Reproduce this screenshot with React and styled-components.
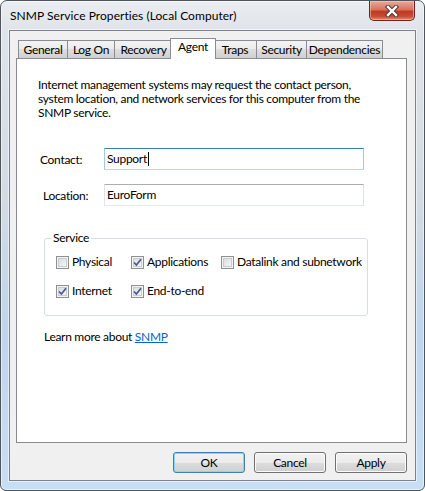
import React from "react";
import styled, { createGlobalStyle } from "styled-components";

const GlobalStyle = createGlobalStyle`
  html, body { margin: 0; padding: 0; background: #fff; }
  body {
    font-family: Lato, "Liberation Sans", sans-serif;
    font-size: 12px;
    letter-spacing: -0.3px;
    color: #000;
  }
  * { box-sizing: border-box; }
`;

const Window = styled.div`
  width: 425px;
  height: 491px;
  border: 1px solid #4f555c;
  border-radius: 7px 7px 6px 6px;
  background: linear-gradient(
    180deg,
    #eaedf1 0px,
    #dfe4ea 30px,
    #d4dbe2 190px,
    #bdd6ee 330px,
    #c7dff4 491px
  );
  box-shadow: inset 0 0 0 1px rgba(255, 255, 255, 0.55);
  display: flex;
  flex-direction: column;
  overflow: hidden;
`;

const TitleBar = styled.div`
  height: 29px;
  display: flex;
  align-items: flex-start;
  padding-left: 9px;
`;

const Title = styled.div`
  font-size: 12px;
  letter-spacing: 0.05px;
  line-height: 30px;
  color: #000;
  white-space: nowrap;
`;

const CloseButton = styled.div`
  margin-left: auto;
  margin-right: 9px;
  width: 46px;
  height: 20px;
  border: 1px solid #6e2418;
  border-top: none;
  border-radius: 0 0 5px 5px;
  background: linear-gradient(
    180deg,
    #e9a99b 0%,
    #d9735e 45%,
    #c13a22 55%,
    #c94a33 80%,
    #e08a73 100%
  );
  box-shadow: inset 0 0 0 1px rgba(255, 210, 200, 0.5);
  display: flex;
  align-items: center;
  justify-content: center;
`;

const Client = styled.div`
  flex: 1;
  margin: 0 8px 9px 8px;
  border: 1px solid #7b848e;
  box-shadow: 0 0 0 1px rgba(255, 255, 255, 0.55);
  background: #f0f0f0;
  display: flex;
  flex-direction: column;
  padding: 7px 8px 0 6px;
`;

const TabStrip = styled.div`
  height: 20px;
  display: flex;
  align-items: flex-end;
  padding-left: 2px;
  position: relative;
  z-index: 1;
`;

const Tab = styled.div`
  position: relative;
  width: ${(p) => (p.$active ? p.$w + 4 : p.$w)}px;
  height: ${(p) => (p.$active ? 21 : 18)}px;
  margin: ${(p) => (p.$active ? "0 -3px -1px -2px" : "0 -1px 0 0")};
  z-index: ${(p) => (p.$active ? 2 : 1)};
  border: 1px solid #898c95;
  border-bottom: none;
  background: ${(p) =>
    p.$active
      ? "#ffffff"
      : "linear-gradient(180deg, #f3f3f3 0%, #ebebeb 50%, #dedede 50%, #d0d0d0 100%)"};
  font-size: 12px;
  line-height: ${(p) => (p.$active ? 16 : 18)}px;
  text-align: center;
  white-space: nowrap;
`;

const Panel = styled.div`
  height: 385px;
  border: 1px solid #898c95;
  background: #fff;
  padding: 19px 0 0 21px;
  display: flex;
  flex-direction: column;
  align-items: flex-start;
`;

const Intro = styled.p`
  margin: 0;
  line-height: 14px;
  white-space: nowrap;
`;

const FieldRow = styled.div`
  display: flex;
  align-items: center;
  margin-top: ${(p) => p.$mt}px;
`;

const FieldLabel = styled.div`
  width: 66px;
  padding-left: ${(p) => p.$indent}px;
`;

const TextBox = styled.div`
  width: 260px;
  height: 22px;
  border: 1px solid;
  border-color: ${(p) =>
    p.$focused
      ? "#3d7bad #a4c9e3 #b7d9ed #a4c9e3"
      : "#abadb3 #dbdfe6 #e3e9ef #e2e3ea"};
  padding-left: 2px;
  line-height: 20px;
  display: flex;
  align-items: center;
`;

const Caret = styled.span`
  display: inline-block;
  width: 1px;
  height: 14px;
  background: #000;
  margin-left: 1px;
`;

const GroupBox = styled.fieldset`
  margin: 25px 0 0 6px;
  width: 324px;
  border: 1px solid #d5dfe5;
  border-radius: 3px;
  padding: 9px 0 16px 11px;
  min-width: 0;
`;

const GroupLegend = styled.legend`
  margin-left: -5px;
  padding: 0 2px 0 2px;
  line-height: 14px;
  font-size: 12px;
`;

const CheckGrid = styled.div`
  display: grid;
  grid-template-columns: 75px 90px auto;
  row-gap: 13px;
`;

const CheckItem = styled.label`
  display: flex;
  align-items: center;
  gap: 3px;
  line-height: 16px;
  white-space: nowrap;
`;

const Box = styled.span`
  width: 13px;
  height: 13px;
  border: 1px solid #8e8f8f;
  background: linear-gradient(135deg, #d4d6d9 0%, #eceded 60%, #fbfbfb 100%);
  box-shadow: inset 0 0 0 1px #f4f4f4, inset 0 0 0 2px #c8cbcf;
  display: flex;
  align-items: center;
  justify-content: center;
  flex: none;
`;

const LearnMore = styled.div`
  margin: 14px 0 0 6px;
  line-height: 14px;
`;

const Link = styled.a`
  color: #0066cc;
  text-decoration: underline;
`;

const ButtonRow = styled.div`
  display: flex;
  justify-content: flex-end;
  gap: 9px;
  margin-top: 9px;
`;

const Button = styled.div`
  width: 72px;
  height: 21px;
  border: 1px solid ${(p) => (p.$default ? "#3c7fb1" : "#707070")};
  border-radius: 3px;
  background: linear-gradient(
    180deg,
    #f2f2f2 0%,
    #ebebeb 50%,
    #dddddd 50%,
    #cfcfcf 100%
  );
  box-shadow: inset 0 0 0 1px ${(p) => (p.$default ? "#8ed3f2" : "#fbfbfb")};
  font-size: 12px;
  line-height: 19px;
  text-align: center;
`;

function CheckBox({ checked, label }) {
  return (
    <CheckItem>
      <Box>
        {checked && (
          <svg width="11" height="11" viewBox="0 0 11 11">
            <path
              d="M2 5.5 L4.4 8 L9 2.2"
              fill="none"
              stroke="#4a5a8f"
              strokeWidth="1.7"
            />
          </svg>
        )}
      </Box>
      {label}
    </CheckItem>
  );
}

const tabs = [
  { label: "General", w: 50 },
  { label: "Log On", w: 48 },
  { label: "Recovery", w: 59 },
  { label: "Agent", w: 42, active: true },
  { label: "Traps", w: 44 },
  { label: "Security", w: 51 },
  { label: "Dependencies", w: 77 },
];

export default function App() {
  return (
    <>
      <GlobalStyle />
      <Window>
        <TitleBar>
          <Title>SNMP Service Properties (Local Computer)</Title>
          <CloseButton>
            <svg width="16" height="12" viewBox="0 0 16 12">
              <path
                d="M4 2 L12 10 M12 2 L4 10"
                stroke="#4a3a38"
                strokeWidth="4.4"
                strokeLinecap="square"
              />
              <path
                d="M4 2 L12 10 M12 2 L4 10"
                stroke="#ffffff"
                strokeWidth="2.4"
                strokeLinecap="square"
              />
            </svg>
          </CloseButton>
        </TitleBar>
        <Client>
          <TabStrip>
            {tabs.map((t) => (
              <Tab key={t.label} $w={t.w} $active={t.active}>
                {t.label}
              </Tab>
            ))}
          </TabStrip>
          <Panel>
            <Intro>
              Internet management systems may request the contact person,
              <br />
              system location, and network services for this computer from the
              <br />
              SNMP service.
            </Intro>
            <FieldRow $mt={28}>
              <FieldLabel $indent={2}>Contact:</FieldLabel>
              <TextBox $focused>
                Support
                <Caret />
              </TextBox>
            </FieldRow>
            <FieldRow $mt={14}>
              <FieldLabel $indent={5}>Location:</FieldLabel>
              <TextBox>EuroForm</TextBox>
            </FieldRow>
            <GroupBox>
              <GroupLegend>Service</GroupLegend>
              <CheckGrid>
                <CheckBox label="Physical" />
                <CheckBox label="Applications" checked />
                <CheckBox label="Datalink and subnetwork" />
                <CheckBox label="Internet" checked />
                <CheckBox label="End-to-end" checked />
              </CheckGrid>
            </GroupBox>
            <LearnMore>
              Learn more about <Link>SNMP</Link>
            </LearnMore>
          </Panel>
          <ButtonRow>
            <Button $default>OK</Button>
            <Button>Cancel</Button>
            <Button>Apply</Button>
          </ButtonRow>
        </Client>
      </Window>
    </>
  );
}
